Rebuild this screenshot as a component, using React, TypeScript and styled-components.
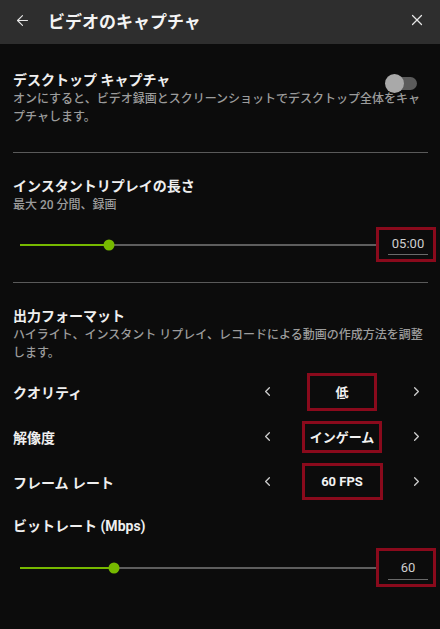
import React from 'react';
import styled, { createGlobalStyle } from 'styled-components';
import { ArrowLeft, X, ChevronLeft, ChevronRight } from 'lucide-react';

const GlobalStyle = createGlobalStyle`
  html, body {
    margin: 0;
    padding: 0;
    background: #0c0c0c;
  }
  body {
    font-family: Roboto, "Noto Sans CJK JP", sans-serif;
    color: #ececec;
  }
`;

const Page = styled.div`
  width: 440px;
  height: 629px;
  background: #0c0c0c;
  overflow: hidden;
`;

const Header = styled.div`
  height: 44px;
  background: #2e2e2e;
  display: flex;
  align-items: center;
  padding: 0 14px 0 14px;
  box-sizing: border-box;
  color: #e6e6e6;
`;

const HeaderTitle = styled.div`
  flex: 1;
  margin-left: 17px;
  font-size: 17px;
  font-weight: 700;
  color: #f4f4f4;
  margin-top: -4px;
`;

const IconBtn = styled.div`
  display: flex;
  align-items: center;
  margin-top: -4px;
`;

const Body = styled.div`
  padding: 26px 12px 0 13px;
`;

const TopRow = styled.div`
  display: flex;
  justify-content: space-between;
  align-items: flex-start;
`;

const Title = styled.div<{ $mt?: number }>`
  font-size: 14px;
  line-height: 20px;
  font-weight: 700;
  color: #efefef;
  margin-top: ${(p) => p.$mt ?? 0}px;
`;

const Desc = styled.div`
  font-size: 12px;
  line-height: 18px;
  color: #9c9c9c;
  font-weight: 500;
`;

const Toggle = styled.div`
  position: relative;
  width: 31px;
  height: 13px;
  border-radius: 7px;
  background: #5b5b5b;
  margin: 7px 11px 0 0;
`;

const Knob = styled.div`
  position: absolute;
  left: -1px;
  top: -3px;
  width: 19px;
  height: 19px;
  border-radius: 50%;
  background: #a9a9a9;
`;

const Divider = styled.div<{ $mt: number }>`
  height: 1px;
  background: #5a5a5a;
  margin-top: ${(p) => p.$mt}px;
`;

const SliderRow = styled.div<{ $mt: number }>`
  display: flex;
  align-items: center;
  padding-left: 7px;
  margin-top: ${(p) => p.$mt}px;
  margin-right: -8px;
`;

const Track = styled.div`
  position: relative;
  flex: 1;
  height: 2px;
  background: #5e5e5e;
`;

const Fill = styled.div`
  height: 100%;
  background: #76b900;
`;

const Thumb = styled.div`
  position: absolute;
  top: 50%;
  width: 11px;
  height: 11px;
  border-radius: 50%;
  background: #76b900;
  transform: translate(-50%, -50%);
`;

const ValueBox = styled.div<{ $h: number; $w: number }>`
  width: ${(p) => p.$w}px;
  height: ${(p) => p.$h}px;
  box-sizing: border-box;
  border: 3px solid #8a0a1c;
  display: flex;
  align-items: center;
  justify-content: center;
`;

const InputBox = styled(ValueBox)`
  padding: 0 5px 0 9px;
`;

const Field = styled.div<{ $pt: number }>`
  flex: 1;
  align-self: stretch;
  display: flex;
  align-items: center;
  justify-content: center;
  font-size: 13px;
  color: #cfcfcf;
  border-bottom: 1px solid #6a6a6a;
  margin-bottom: 4px;
  padding-top: ${(p) => p.$pt}px;
`;

const SelectRows = styled.div`
  margin-top: 7px;
`;

const SelectRow = styled.div`
  height: 45px;
  display: flex;
  align-items: center;
  justify-content: space-between;
`;

const RowLabel = styled.div`
  font-size: 14px;
  font-weight: 700;
  color: #efefef;
`;

const Selector = styled.div`
  width: 164px;
  display: flex;
  align-items: center;
  justify-content: space-between;
  margin-right: 4px;
  color: #cfcfcf;
`;

const ValueSlot = styled.div`
  flex: 1;
  display: flex;
  justify-content: center;
`;

const SelectValue = styled(ValueBox)`
  font-size: 13px;
  font-weight: 700;
  color: #f2f2f2;
`;

type SliderProps = {
  pct: number;
  value: string;
  mt: number;
  h: number;
  pt: number;
};

const Slider = ({ pct, value, mt, h, pt }: SliderProps) => (
  <SliderRow $mt={mt}>
    <Track>
      <Fill style={{ width: `${pct}%` }} />
      <Thumb style={{ left: `${pct}%` }} />
    </Track>
    <InputBox $w={60} $h={h}>
      <Field $pt={pt}>{value}</Field>
    </InputBox>
  </SliderRow>
);

const options = [
  { label: 'クオリティ', value: '低', w: 70, h: 38 },
  { label: '解像度', value: 'インゲーム', w: 80, h: 32 },
  { label: 'フレーム レート', value: '60 FPS', w: 81, h: 37 },
];

export default function App() {
  return (
    <Page>
      <GlobalStyle />
      <Header>
        <IconBtn>
          <ArrowLeft size={17} strokeWidth={1.6} />
        </IconBtn>
        <HeaderTitle>ビデオのキャプチャ</HeaderTitle>
        <IconBtn>
          <X size={18} strokeWidth={1.6} />
        </IconBtn>
      </Header>
      <Body>
        <TopRow>
          <Title>デスクトップ キャプチャ</Title>
          <Toggle>
            <Knob />
          </Toggle>
        </TopRow>
        <Desc>
          オンにすると、ビデオ録画とスクリーンショットでデスクトップ全体をキャプチャします。
        </Desc>
        <Divider $mt={26} />

        <Title $mt={23}>インスタントリプレイの長さ</Title>
        <Desc>最大 20 分間、録画</Desc>
        <Slider pct={25} value="05:00" mt={13} h={35} pt={2} />
        <Divider $mt={20} />

        <Title $mt={23}>出力フォーマット</Title>
        <Desc>
          ハイライト、インスタント リプレイ、レコードによる動画の作成方法を調整します。
        </Desc>
        <SelectRows>
          {options.map((o) => (
            <SelectRow key={o.label}>
              <RowLabel>{o.label}</RowLabel>
              <Selector>
                <ChevronLeft size={15} strokeWidth={2} />
                <ValueSlot>
                  <SelectValue $w={o.w} $h={o.h}>
                    {o.value}
                  </SelectValue>
                </ValueSlot>
                <ChevronRight size={15} strokeWidth={2} />
              </Selector>
            </SelectRow>
          ))}
        </SelectRows>
        <Title $mt={12}>ビットレート (Mbps)</Title>
        <Slider pct={26.5} value="60" mt={12} h={39} pt={4} />
      </Body>
    </Page>
  );
}
